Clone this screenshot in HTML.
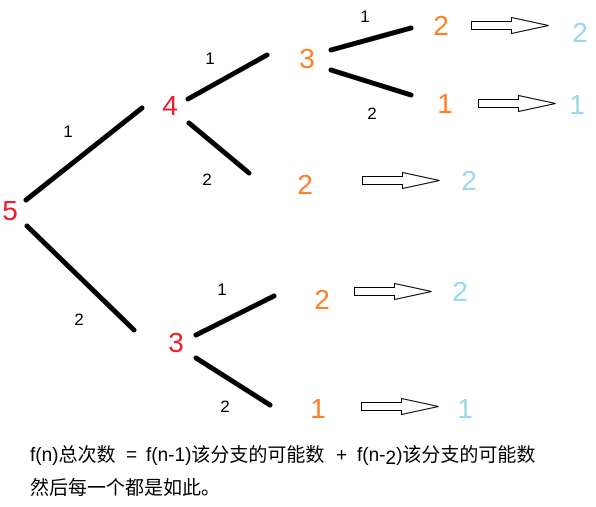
<!DOCTYPE html>
<html><head><meta charset="utf-8"><style>
html,body{margin:0;padding:0;background:#fff;width:596px;height:507px;overflow:hidden}
svg{position:absolute;left:0;top:0}
.t{position:absolute;font-family:"Liberation Sans","Noto Sans CJK SC",sans-serif;font-size:19px;color:#000;white-space:nowrap;line-height:24px}
</style></head><body>
<svg width="596" height="507" font-family="DejaVu Sans, Liberation Sans, sans-serif">
<g stroke="#000" stroke-width="5" stroke-linecap="round">
<line x1="26" y1="200" x2="142" y2="108"/>
<line x1="188" y1="99" x2="267" y2="55"/>
<line x1="189" y1="123" x2="249" y2="173"/>
<line x1="27" y1="226" x2="134" y2="330"/>
<line x1="196" y1="335" x2="274" y2="296"/>
<line x1="196" y1="358" x2="270" y2="405"/>
<line x1="331" y1="50" x2="411" y2="28"/>
<line x1="331" y1="70" x2="411" y2="95"/>
</g>
<g fill="#fff" stroke="#000" stroke-width="1">
<path d="M471.5 21.5h40v-4l37 8l-37 8v-4h-40z"/>
<path d="M478.5 99.5h40v-4l37 8l-37 8v-4h-40z"/>
<path d="M362.5 176.5h40v-4l37 8l-37 8v-4h-40z"/>
<path d="M354.5 287.5h40v-4l37 8l-37 8v-4h-40z"/>
<path d="M361.5 402.5h40v-4l37 8l-37 8v-4h-40z"/>
</g>
<g font-size="28" text-anchor="middle" font-family="Liberation Sans, sans-serif">
<text x="10" y="220" fill="#ee1c2e">5</text>
<text x="170" y="115" fill="#ee1c2e">4</text>
<text x="176" y="352" fill="#ee1c2e">3</text>
<g fill="#ff7f27">
<text x="307" y="68">3</text>
<text x="441" y="35">2</text>
<text x="445" y="113">1</text>
<text x="305" y="194">2</text>
<text x="322" y="309">2</text>
<text x="318" y="418">1</text>
</g>
<g fill="#99d9ea">
<text x="580" y="42">2</text>
<text x="577" y="114">1</text>
<text x="469" y="190">2</text>
<text x="460" y="301">2</text>
<text x="465" y="418">1</text>
</g>
</g>
<g font-size="17" text-anchor="middle" fill="#000" font-family="Liberation Sans, sans-serif">
<text x="365" y="22">1</text>
<text x="372" y="119">2</text>
<text x="210" y="64">1</text>
<text x="68" y="137">1</text>
<text x="207" y="185">2</text>
<text x="79" y="325">2</text>
<text x="222" y="295">1</text>
<text x="225" y="412">2</text>
</g>
</svg>
<div class="t" style="top:444px;left:30px">f(n)总次数</div>
<div class="t" style="top:444px;left:126px">=</div>
<div class="t" style="top:444px;left:146px">f(n-1)该分支的可能数</div>
<div class="t" style="top:444px;left:336px">+</div>
<div class="t" style="top:444px;left:357px">f(n-<span style="position:relative;top:3px">2</span>)该分支的可能数</div>
<div class="t" style="top:477px;left:30px">然后每一个都是如此。</div>
</body></html>
